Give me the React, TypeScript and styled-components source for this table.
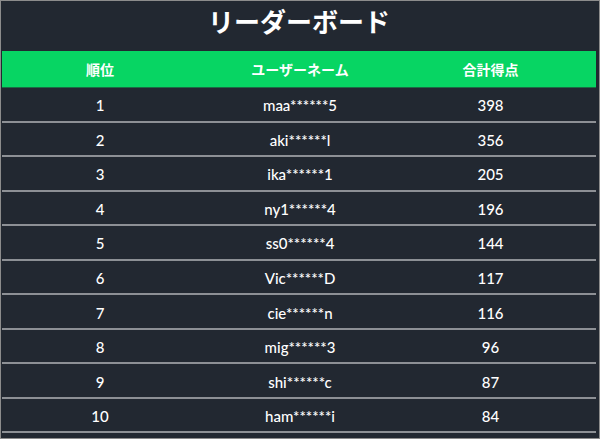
import { createGlobalStyle, styled } from "styled-components";

const GlobalStyle = createGlobalStyle`
  html, body {
    margin: 0;
    padding: 0;
    background-color: #222831;
  }
`;

const Frame = styled.div`
  box-sizing: border-box;
  width: 600px;
  height: 439px;
  border: 1px solid #8c8c8c;
  padding: 0 3px 0 1px;
  background-color: #222831;
  color: #ffffff;
  font-family: Lato, "Noto Sans CJK JP", sans-serif;
  overflow: hidden;
`;

const Title = styled.h1`
  box-sizing: border-box;
  height: 50px;
  margin: 0;
  padding-top: 3px;
  text-align: center;
  font-family: "Noto Sans CJK JP", sans-serif;
  font-size: 26px;
  font-weight: 700;
  line-height: 34px;
`;

const Table = styled.div`
  display: flex;
  flex-direction: column;
`;

const Row = styled.div<{ $header?: boolean }>`
  box-sizing: border-box;
  display: grid;
  grid-template-columns: 196px 204px 1fr;
  align-items: center;
  height: ${({ $header }) => ($header ? "37px" : "34.55px")};
  background-color: ${({ $header }) => ($header ? "#07d563" : "transparent")};
  border-bottom: ${({ $header }) =>
    $header ? "1px solid #1b6b44" : "2px solid #8d9095"};
`;

const Cell = styled.div<{ $header?: boolean; $last?: boolean }>`
  text-align: center;
  padding-right: ${({ $last }) => ($last ? "17px" : "0")};
  font-family: ${({ $header }) =>
    $header
      ? `"Noto Sans CJK JP", sans-serif`
      : `Lato, "Noto Sans CJK JP", sans-serif`};
  font-size: ${({ $header }) => ($header ? "14px" : "15px")};
  font-weight: ${({ $header }) => ($header ? 700 : 500)};
  line-height: 18px;
  padding-top: ${({ $header }) => ($header ? "0" : "2px")};
`;

const rows = [
  { rank: 1, name: "maa******5", score: 398 },
  { rank: 2, name: "aki******l", score: 356 },
  { rank: 3, name: "ika******1", score: 205 },
  { rank: 4, name: "ny1******4", score: 196 },
  { rank: 5, name: "ss0******4", score: 144 },
  { rank: 6, name: "Vic******D", score: 117 },
  { rank: 7, name: "cie******n", score: 116 },
  { rank: 8, name: "mig******3", score: 96 },
  { rank: 9, name: "shi******c", score: 87 },
  { rank: 10, name: "ham******i", score: 84 },
];

function App() {
  return (
    <>
      <GlobalStyle />
      <Frame>
        <Title>リーダーボード</Title>
        <Table>
          <Row $header>
            <Cell $header>順位</Cell>
            <Cell $header>ユーザーネーム</Cell>
            <Cell $header $last>
              合計得点
            </Cell>
          </Row>
          {rows.map((r) => (
            <Row key={r.rank}>
              <Cell>{r.rank}</Cell>
              <Cell>{r.name}</Cell>
              <Cell $last>{r.score}</Cell>
            </Row>
          ))}
        </Table>
      </Frame>
    </>
  );
}

export default App;
